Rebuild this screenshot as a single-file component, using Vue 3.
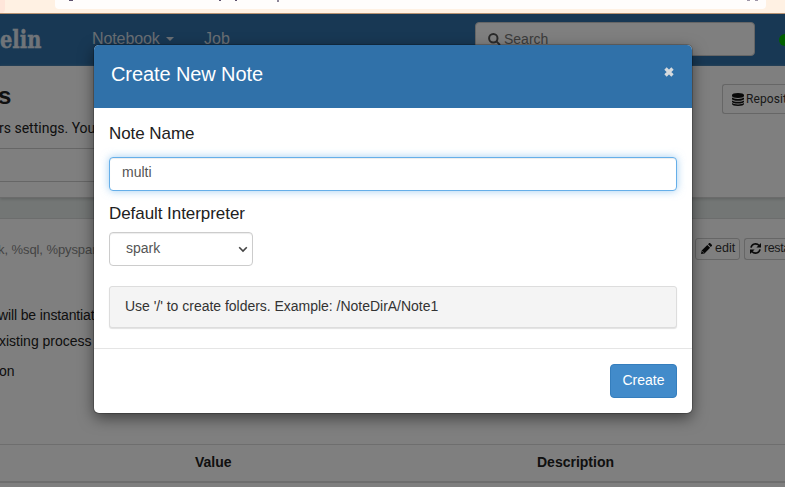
<script setup>
import { ref } from 'vue'
const noteName = ref('multi')
const interpreter = ref('spark')
</script>

<template>
  <div class="screen">
    <div class="chrome">
      <div class="tab-edge"></div>
      <div class="address"><i class="ink a"></i><i class="ink b"></i><i class="ink c"></i><i class="ink d"></i><i class="ink e"></i><i class="ink e"></i></div>
    </div>
    <div class="page">
      <nav class="navbar">
        <span class="brand">elin</span>
        <span class="nav-item notebook">Notebook</span><i class="caret"></i>
        <span class="nav-item job">Job</span>
        <div class="search">
          <svg width="13" height="13" viewBox="0 0 13 13"><circle cx="5.3" cy="5.3" r="4.2" /><path d="M8.4 8.4L12 12" /></svg>
          <span>Search</span>
        </div>
        <i class="status"></i>
      </nav>
      <header class="intro">
        <div class="intro-top">
          <h3>s</h3>
          <div class="btn repo">
            <svg width="12" height="13" viewBox="0 0 12 13"><path d="M0 2C0 .7 2.5 0 6 0s6 .7 6 2v1c0 1.2-2.5 2-6 2S0 4.200 0 3zM0 4.600c1 .9 3.200 1.300 6 1.300s5-.4 6-1.300V6c0 1.100-2.500 1.800-6 1.800S0 7.100 0 6zM0 7.400c1 .9 3.200 1.300 6 1.300s5-.4 6-1.300v1.300c0 1.100-2.500 1.800-6 1.800S0 9.800 0 8.700zM0 10.100c1 .9 3.200 1.300 6 1.300s5-.4 6-1.300v1c0 1.200-2.500 1.900-6 1.900s-6-.7-6-1.900z" /></svg>
            <span>Reposit</span>
          </div>
        </div>
        <p>rs settings. You</p>
        <div class="filter"></div>
      </header>
      <section class="card">
        <div class="card-top">
          <span class="langs">k, %sql, %pyspar</span>
          <div class="actions">
            <div class="btn small edit">
              <svg width="11" height="11" viewBox="0 0 11 11"><path d="M0 11l.7-3.400 5.600-5.600 2.800 2.800-5.600 5.600zM7 1.300L8 .3c.4-.4.9-.4 1.300 0l1.500 1.500c.4.4.4.9 0 1.300l-1 1z" /><path class="cut" d="M1.300 8.200l1.500 1.500" /></svg>
              <span>edit</span>
            </div>
            <div class="btn small restart">
              <svg width="11" height="11" viewBox="0 0 11 11"><path class="line" d="M1 4.700C1.700.6 6.700-.2 9.100 2.600M10 6.300C9.300 10.400 4.300 11.200 1.900 8.400" /><path d="M11 0v4.600H6.400zM0 11V6.400h4.600z" /></svg>
              <span>resta</span>
            </div>
          </div>
        </div>
        <div class="copy">
          <p class="one">will be instantiat</p>
          <p class="two">xisting process</p>
          <p class="three">on</p>
        </div>
        <div class="table-head"><b class="value">Value</b><b class="description">Description</b></div>
      </section>
      <div class="backdrop"></div>
    </div>
    <div class="modal">
      <div class="modal-head">
        <h4>Create New Note</h4>
        <button class="close" aria-label="Close"><svg width="10" height="10" viewBox="0 0 10 10"><path d="M1.500 1.500l7 7M8.500 1.500l-7 7" /></svg></button>
      </div>
      <div class="modal-body">
        <label for="note" class="note-label">Note Name</label>
        <input id="note" v-model="noteName" class="control" />
        <label class="interp-label">Default Interpreter</label>
        <div class="select"><span>{{ interpreter }}</span><svg width="10" height="7" viewBox="0 0 10 7"><path d="M1.200 1.200L5 5l3.800-3.800" /></svg></div>
        <div class="hint"><span>Use '/' to create folders. Example: /NoteDirA/Note1</span></div>
      </div>
      <div class="modal-foot"><button class="create">Create</button></div>
    </div>
  </div>
</template>

<style>
body { margin: 0; overflow: hidden; }
</style>
<style scoped>
* { box-sizing: border-box; }
h3, h4, p { margin: 0; font-weight: 400; }
.screen { position: relative; width: 785px; height: 487px; overflow: hidden; font: 14px/20px "Liberation Sans", Arial, sans-serif; color: #212121; }
.chrome { height: 14px; background: #fff1e3; border-bottom: 1px solid #b89373; display: flex; align-items: flex-start; }
.tab-edge { width: 5px; height: 13px; background: #ffe6da; margin-right: 50px; border-radius: 0 0 4px 0; }
.address { height: 9px; background: #fffdfc; border-radius: 0 0 4px 4px; display: flex; padding-left: 14px; flex: 0 0 711px; }
.ink { height: 1px; width: 4px; background: #5d526f; flex: none; }
.ink.b { width: 2px; margin-left: 146px; }
.ink.c { width: 2px; margin-left: 14px; }
.ink.d { width: 2px; margin-left: 40px; height: 2px; opacity: .7; margin-right: 468px; }
.ink.e { width: 3px; margin-left: 0; margin-right: 5px; opacity: .6; }
.page { position: relative; height: 473px; overflow: hidden; background: #fff; }
.navbar { height: 52px; background: #3071a9; display: flex; }
.brand { width: 92px; flex: none; padding-top: 13px; color: #fff; opacity: .85; font: bold 24px/26px "DejaVu Serif", serif; transform: scaleX(.81); transform-origin: 0 0; -webkit-text-stroke: .4px #fff; }
.nav-item { color: #d3dde6; font-size: 16px; line-height: 20px; margin-top: 15px; flex: none; }
.notebook { width: 74px; letter-spacing: -.1px; }
.caret { border: 4px solid transparent; border-top-color: #d3dde6; border-bottom: 0; height: 0; margin-top: 23px; flex: none; }
.job { width: 271px; margin-left: 30px; }
.search { width: 280px; flex: none; height: 34px; margin-top: 8px; border: 1px solid #ccc; border-radius: 4px; background: #fff; color: #777; padding: 7px 0 0 12px; display: flex; gap: 3px; line-height: 18px; }
.search svg { margin-top: 3px; fill: none; stroke: #555; stroke-width: 2; }
.status { width: 12px; height: 12px; margin: 20px 0 0 24px; border-radius: 50%; background: #00c000; flex: none; }
.intro { height: 132px; border-bottom: 1px solid #d6d6d6; box-shadow: 0 1px 3px #bdc2c0; position: relative; z-index: 1; background: #fff; font-family: Roboto, sans-serif; }
.intro-top { height: 52px; display: flex; justify-content: space-between; }
h3 { font: bold 24px/26px "Liberation Sans", sans-serif; margin: 17px 0 0 -2px; }
.btn { border: 1px solid #ccc; border-radius: 3px; background: #fff; color: #333; display: flex; align-items: center; white-space: nowrap; }
.btn svg { flex: none; fill: #111; }
.repo { width: 63px; height: 30px; margin-top: 18px; padding-left: 9px; gap: 2px; font-size: 12px; border-radius: 3px 0 0 3px; border-right: 0; letter-spacing: .1px; }
.intro p { line-height: 20px; height: 30px; margin-left: -1px; }
.filter { width: 430px; height: 34px; border: 1px solid #ccc; border-left: 0; }
.card { margin-top: 20px; height: 269px; border-top: 1px solid #d8dbda; background: #fff; box-shadow: 0 -21px 0 #e6ecea; }
.card-top { height: 84px; padding-top: 18px; display: flex; justify-content: space-between; }
.langs { color: #888; margin: 3px 0 0 -2px; font-size: 13px; letter-spacing: -.08px; }
.actions { display: flex; gap: 4px; width: 90px; }
.small { height: 22px; padding-left: 5px; gap: 3px; font-size: 12.500px; margin-top: 1px; line-height: 18px; padding-bottom: 2px; }
.edit { width: 45px; flex: none; }
.restart { width: 41px; flex: none; border-right: 0; border-radius: 3px 0 0 3px; gap: 3px; }
.restart span { letter-spacing: -.4px; }
.cut { fill: none; stroke: #fff; stroke-width: .7; }
.line { fill: none; stroke: #111; stroke-width: 1.600; }
.copy { height: 141px; padding-top: 1px; }
.one { margin: 1px 0 0 -2px; height: 26px; letter-spacing: -.13px; }
.two { margin-left: -1px; height: 30px; }
.three { margin-left: -1px; }
.table-head { height: 39px; border-top: 1px solid #ddd; border-bottom: 2px solid #ddd; padding-top: 7px; display: flex; color: #212121; }
.value { width: 342px; margin-left: 195px; }
.backdrop { position: absolute; inset: 0; z-index: 2; background: rgba(0,0,0,.5); }
.modal { position: absolute; z-index: 3; left: 94px; top: 45px; width: 598px; height: 368px; border-radius: 5px; background: #fff; box-shadow: 0 0 0 1px rgba(0,0,0,.2), 0 5px 15px rgba(0,0,0,.5); display: flex; flex-direction: column; }
.modal-head { height: 63px; background: #3071a9; color: #fff; border-radius: 5px 5px 0 0; display: flex; justify-content: space-between; padding: 15px 18px 0 17px; }
h4 { font-size: 20px; line-height: 28px; letter-spacing: -.1px; }
.close { border: 0; padding: 0; background: none; width: 10px; height: 10px; margin-top: 7px; display: flex; }
.close path { fill: none; stroke: #d6dadd; stroke-width: 3.300; }
.modal-body { height: 240px; padding: 15px 15px 0; display: flex; flex-direction: column; }
label { font-size: 17px; line-height: 22px; letter-spacing: -.06px; }
.note-label { height: 34px; }
.control { width: 568px; height: 34px; flex: none; border: 1px solid #66afe9; border-radius: 4px; background: #fff; padding: 0 12px 4px; font: 14px "Liberation Sans", sans-serif; color: #555; outline: 0; box-shadow: inset 0 1px 1px rgba(0,0,0,.075), 0 0 8px rgba(102,175,233,.6); }
.interp-label { height: 41px; padding-top: 12px; }
.select { width: 144px; height: 34px; border: 1px solid #ccc; border-radius: 4px; padding: 5px 4px 0 16px; color: #555; display: flex; justify-content: space-between; box-shadow: inset 0 1px 1px rgba(0,0,0,.075); }
.select svg { margin-top: 8px; fill: none; stroke: #444; stroke-width: 1.600; }
.hint { margin-top: 20px; height: 42px; border: 1px solid #ddd; border-radius: 3px; background: #f4f4f4; color: #333; padding: 9px 15px; box-shadow: 0 1px 1px rgba(0,0,0,.12); letter-spacing: -.02px; }
.modal-foot { height: 65px; border-top: 1px solid #e5e5e5; padding: 15px; display: flex; justify-content: flex-end; }
.create { width: 67px; height: 34px; border: 1px solid #357ebd; border-radius: 4px; background: #428bca; color: #fff; padding: 0 0 2px; font: 14px "Liberation Sans", sans-serif; }
</style>
